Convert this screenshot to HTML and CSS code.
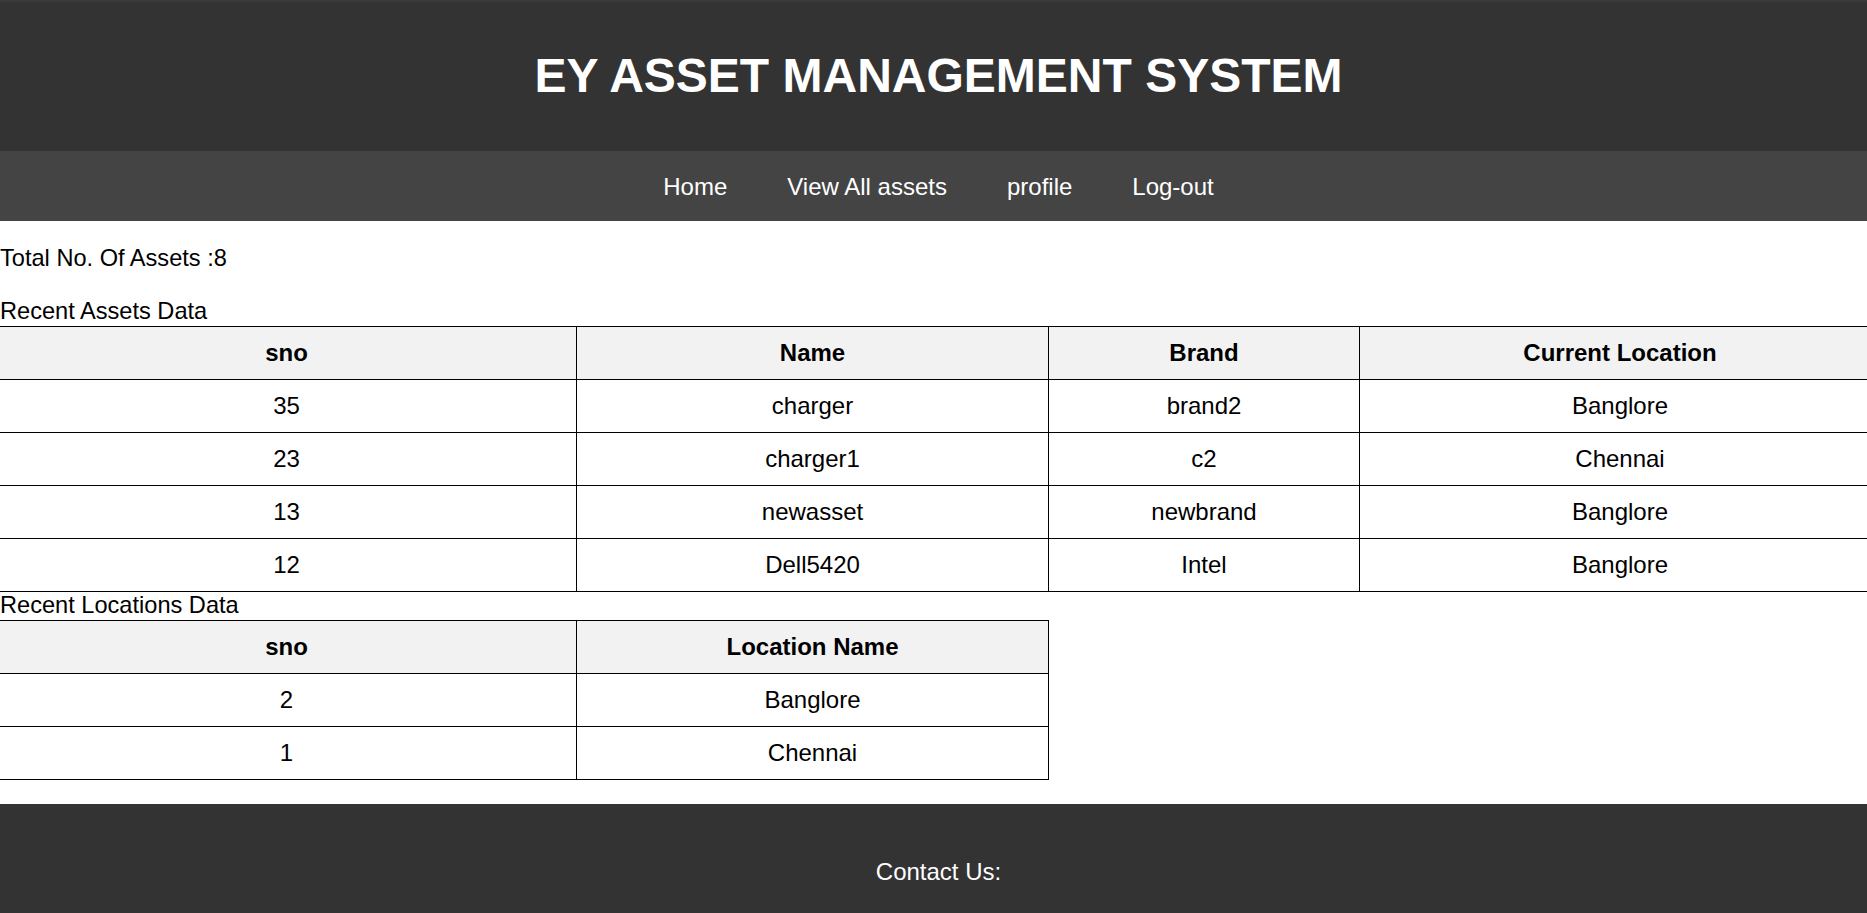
FILE: index.html
```html
<!DOCTYPE html>
<html>
<head>
<meta charset="utf-8">
<title>EY Asset Management System</title>
<link rel="stylesheet" href="styles.css">
</head>
<body>
<header class="site-header">
  <h1 class="site-title">EY ASSET MANAGEMENT SYSTEM</h1>
</header>
<nav class="site-nav">
  <a class="nav-link" href="#">Home</a>
  <a class="nav-link" href="#">View All assets</a>
  <a class="nav-link" href="#">profile</a>
  <a class="nav-link" href="#">Log-out</a>
</nav>
<main class="content">
  <div class="total">Total No. Of Assets :8</div>
  <div class="label">Recent Assets Data</div>
  <table class="data-table assets-table">
    <colgroup>
      <col class="col-sno">
      <col class="col-name">
      <col class="col-brand">
      <col class="col-loc">
    </colgroup>
    <thead>
      <tr><th>sno</th><th>Name</th><th>Brand</th><th>Current Location</th></tr>
    </thead>
    <tbody>
      <tr><td>35</td><td>charger</td><td>brand2</td><td>Banglore</td></tr>
      <tr><td>23</td><td>charger1</td><td>c2</td><td>Chennai</td></tr>
      <tr><td>13</td><td>newasset</td><td>newbrand</td><td>Banglore</td></tr>
      <tr><td>12</td><td>Dell5420</td><td>Intel</td><td>Banglore</td></tr>
    </tbody>
  </table>
  <div class="label">Recent Locations Data</div>
  <table class="data-table locations-table">
    <colgroup>
      <col class="col-sno">
      <col class="col-name">
    </colgroup>
    <thead>
      <tr><th>sno</th><th>Location Name</th></tr>
    </thead>
    <tbody>
      <tr><td>2</td><td>Banglore</td></tr>
      <tr><td>1</td><td>Chennai</td></tr>
    </tbody>
  </table>
</main>
<footer class="site-footer">
  <div class="footer-text">Contact Us:</div>
</footer>
</body>
</html>
```

FILE: styles.css
```css
* {
  box-sizing: border-box;
}

html, body {
  margin: 0;
  padding: 0;
}

body {
  font-family: "Liberation Sans", Arial, sans-serif;
  color: #000;
  background: #fff;
  font-size: 24px;
  line-height: 27px;
  overflow: hidden;
}

.site-header {
  background: #333333;
  padding: 48px 0 48px 10px;
  text-align: center;
  box-shadow: inset 0 2px 0 #3a3a3a;
}

.site-title {
  margin: 0;
  color: #ffffff;
  font-size: 48px;
  line-height: 55px;
  font-weight: bold;
}

.site-nav {
  background: #444444;
  height: 70px;
  display: flex;
  justify-content: center;
  align-items: center;
  padding-left: 10px;
}

.nav-link {
  color: #ffffff;
  text-decoration: none;
  font-size: 24px;
  line-height: 27px;
  padding: 0 30px;
}

.content {
  padding-top: 24px;
  padding-bottom: 24px;
}

.total {
  font-size: 23.6px;
  margin-bottom: 26px;
}

.label {
  font-size: 23.6px;
  height: 28px;
}

.data-table {
  border-collapse: collapse;
  table-layout: fixed;
  margin-left: -4px;
}

.assets-table {
  width: calc(100% + 18px);
}

.locations-table {
  width: 1052px;
}

.col-sno { width: 580px; }
.col-name { width: 472px; }
.col-brand { width: 311px; }
.col-loc { width: auto; }

.data-table th,
.data-table td {
  border: 1px solid #000;
  padding: 13px 8px;
  line-height: 26px;
  text-align: center;
  font-size: 24px;
}

.data-table th {
  background: #f2f2f2;
  font-weight: bold;
}

.site-footer {
  background: #333333;
  color: #ffffff;
  text-align: center;
  padding: 54px 0 29px 10px;
  height: 110px;
}
```
